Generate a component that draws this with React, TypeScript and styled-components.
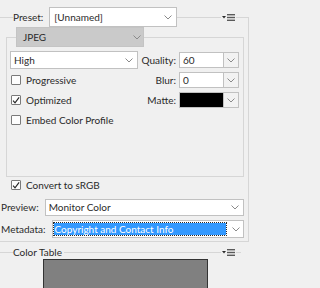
import styled, { createGlobalStyle } from 'styled-components';

const rule = '#d6d6d6';
const edge = '#c1c1c1';

const GlobalStyle = createGlobalStyle`
  html, body {
    margin: 0;
    padding: 0;
    background: #f0f0f0;
  }
  body {
    font-family: Lato, "Noto Sans", sans-serif;
    font-size: 10px;
    color: #2a2a2a;
  }
`;

const Chevron = () => (
  <ChevronSvg width="8" height="5" viewBox="0 0 8 5">
    <polyline points="0.5,0.5 4,4 7.5,0.5" fill="none" stroke="#8a8a8a" strokeWidth="1" />
  </ChevronSvg>
);

const PanelMenu = ({ right }: { right: number }) => (
  <MenuButton $right={right}>
    <svg width="13" height="7" viewBox="0 0 13 7">
      <polygon points="0,2 4,2 2,4.5" fill="#2b2b2b" />
      <rect x="5" y="0" width="8" height="1.4" fill="#5a5a5a" />
      <rect x="5" y="2.8" width="8" height="1.4" fill="#5a5a5a" />
      <rect x="5" y="5.6" width="8" height="1.4" fill="#5a5a5a" />
    </svg>
  </MenuButton>
);

const Tick = () => (
  <svg width="9" height="9" viewBox="0 0 9 9">
    <polyline points="1.2,4.6 3.4,7.2 8,1" fill="none" stroke="#262626" strokeWidth="1.3" />
  </svg>
);

const Check = ({ checked, children }: { checked?: boolean; children: string }) => (
  <CheckRow>
    <Box>{checked && <Tick />}</Box>
    <span>{children}</span>
  </CheckRow>
);

const App = () => {
  return (
    <Screen>
      <GlobalStyle />
      <OuterGroup>
        <GroupHeader $h={22} $pl={13}>
          <Legend $gap={6}>Preset:</Legend>
          <DropDown $w={128} $h={20} $pl={4} $pr={4}>
            <span>[Unnamed]</span>
            <Chevron />
          </DropDown>
          <PanelMenu right={12} />
        </GroupHeader>

        <InnerGroup>
          <GroupHeader $h={20} $pl={9}>
            <DropDown $w={128} $h={20} $pl={6} $pr={2} $tone="dim">
              <span>JPEG</span>
              <Chevron />
            </DropDown>
          </GroupHeader>

          <Rows>
            <Row>
              <LeftCell>
                <DropDown $w={128} $h={18} $pl={3} $pr={4}>
                  <span>High</span>
                  <Chevron />
                </DropDown>
              </LeftCell>
              <FieldLabel>Quality:</FieldLabel>
              <Combo>
                <ComboField>60</ComboField>
                <ComboButton>
                  <Chevron />
                </ComboButton>
              </Combo>
            </Row>
            <Row>
              <LeftCell>
                <Check>Progressive</Check>
              </LeftCell>
              <FieldLabel>Blur:</FieldLabel>
              <Combo>
                <ComboField>0</ComboField>
                <ComboButton>
                  <Chevron />
                </ComboButton>
              </Combo>
            </Row>
            <Row>
              <LeftCell>
                <Check checked>Optimized</Check>
              </LeftCell>
              <FieldLabel>Matte:</FieldLabel>
              <Combo>
                <ComboField $swatch="#000" />
                <ComboButton>
                  <Chevron />
                </ComboButton>
              </Combo>
            </Row>
            <Row>
              <LeftCell>
                <Check>Embed Color Profile</Check>
              </LeftCell>
            </Row>
          </Rows>
        </InnerGroup>

        <ConvertRow>
          <Check checked>Convert to sRGB</Check>
        </ConvertRow>

        <SettingRow $top={5}>
          <SettingLabel>Preview:</SettingLabel>
          <DropDown $h={17} $pl={3} $pr={4}>
            <span>Monitor Color</span>
            <Chevron />
          </DropDown>
        </SettingRow>
        <SettingRow $top={4}>
          <SettingLabel>Metadata:</SettingLabel>
          <DropDown $h={18} $pl={1} $pr={3}>
            <Highlight>Copyright and Contact Info</Highlight>
            <Chevron />
          </DropDown>
        </SettingRow>
      </OuterGroup>

      <TableGroup>
        <GroupHeader $h={14} $pl={13}>
          <Legend $gap={2}>Color Table</Legend>
          <PanelMenu right={5} />
        </GroupHeader>
        <ColorTable />
      </TableGroup>
    </Screen>
  );
};

const Screen = styled.div`
  width: 252px;
  height: 288px;
  overflow: hidden;
  display: flex;
  flex-direction: column;
  background: #f0f0f0;
`;

const OuterGroup = styled.div`
  box-sizing: border-box;
  width: 249px;
  margin-top: 17px;
  padding-bottom: 3px;
  border-right: 1px solid ${rule};
  border-bottom: 1px solid ${rule};
  display: flex;
  flex-direction: column;
`;

const GroupHeader = styled.div<{ $h: number; $pl: number }>`
  box-sizing: border-box;
  display: flex;
  align-items: center;
  height: ${(p) => p.$h}px;
  margin-top: -${(p) => p.$h / 2}px;
  padding-left: ${(p) => p.$pl}px;
  background: linear-gradient(${rule}, ${rule}) 0 ${(p) => p.$h / 2}px / 100% 1px no-repeat;
`;

const Legend = styled.span<{ $gap: number }>`
  padding-right: ${(p) => p.$gap}px;
  background: #f0f0f0;
  line-height: 14px;
`;

const MenuButton = styled.span<{ $right: number }>`
  display: flex;
  margin-left: auto;
  margin-right: ${(p) => p.$right}px;
  padding: 0 1px;
  background: #f0f0f0;
`;

const ChevronSvg = styled.svg`
  flex: none;
  display: block;
`;

const DropDown = styled.div<{ $w?: number; $h: number; $pl: number; $pr: number; $tone?: 'dim' }>`
  box-sizing: border-box;
  display: flex;
  align-items: center;
  justify-content: space-between;
  flex: ${(p) => (p.$w ? 'none' : '1')};
  width: ${(p) => (p.$w ? `${p.$w}px` : 'auto')};
  height: ${(p) => p.$h}px;
  padding: 0 ${(p) => p.$pr}px 0 ${(p) => p.$pl}px;
  background: ${(p) => (p.$tone === 'dim' ? '#cacaca' : '#fff')};
  border: 1px solid ${(p) => (p.$tone === 'dim' ? '#c4c4c4' : edge)};
  white-space: nowrap;
`;

const InnerGroup = styled.div`
  box-sizing: border-box;
  height: 140px;
  margin: 9px 4px 0 6px;
  border: 1px solid ${rule};
  border-top: none;
  display: flex;
  flex-direction: column;
`;

const Rows = styled.div`
  margin-top: 3px;
  padding: 0 4px 0 3px;
  display: flex;
  flex-direction: column;
`;

const Row = styled.div`
  display: flex;
  align-items: center;
  height: 20px;
`;

const LeftCell = styled.div`
  flex: 1;
  display: flex;
  align-items: center;
`;

const FieldLabel = styled.span`
  width: 36px;
  margin-right: 3px;
  text-align: right;
`;

const Combo = styled.div`
  box-sizing: border-box;
  display: flex;
  width: 60px;
  height: 16px;
  border: 1px solid ${edge};
  background: #fff;
`;

const ComboField = styled.div<{ $swatch?: string }>`
  flex: 1;
  display: flex;
  align-items: center;
  padding-left: 3px;
  background: ${(p) => p.$swatch ?? '#fff'};
`;

const ComboButton = styled.div`
  width: 14px;
  display: flex;
  align-items: center;
  justify-content: center;
  border-left: 1px solid ${edge};
  background: #f2f2f2;
`;

const CheckRow = styled.label`
  display: flex;
  align-items: center;
  gap: 5px;
  margin-left: 1px;
`;

const Box = styled.span`
  box-sizing: border-box;
  width: 10px;
  height: 10px;
  display: flex;
  align-items: center;
  justify-content: center;
  border: 1px solid #7a7a7a;
  border-radius: 1px;
  background: #fdfdfd;
`;

const ConvertRow = styled.div`
  display: flex;
  align-items: center;
  height: 16px;
  padding-left: 10px;
`;

const SettingRow = styled.div<{ $top: number }>`
  display: flex;
  align-items: center;
  height: 18px;
  margin-top: ${(p) => p.$top}px;
  padding: 0 4px 0 1px;
`;

const SettingLabel = styled.span`
  margin-right: 6px;
`;

const Highlight = styled.span`
  flex: 1;
  height: 12px;
  margin-right: 6px;
  padding-left: 1px;
  display: flex;
  align-items: center;
  background: #3399ff;
  color: #fff;
  outline: 1px dotted #2a2a2a;
`;

const TableGroup = styled.div`
  width: 241px;
  margin-top: 10px;
  flex: 1;
  display: flex;
  flex-direction: column;
`;

const ColorTable = styled.div`
  box-sizing: border-box;
  flex: 1;
  width: 165px;
  margin-left: 43px;
  border: 1px solid #333;
  border-bottom: none;
  background: #808080;
`;

export default App;
